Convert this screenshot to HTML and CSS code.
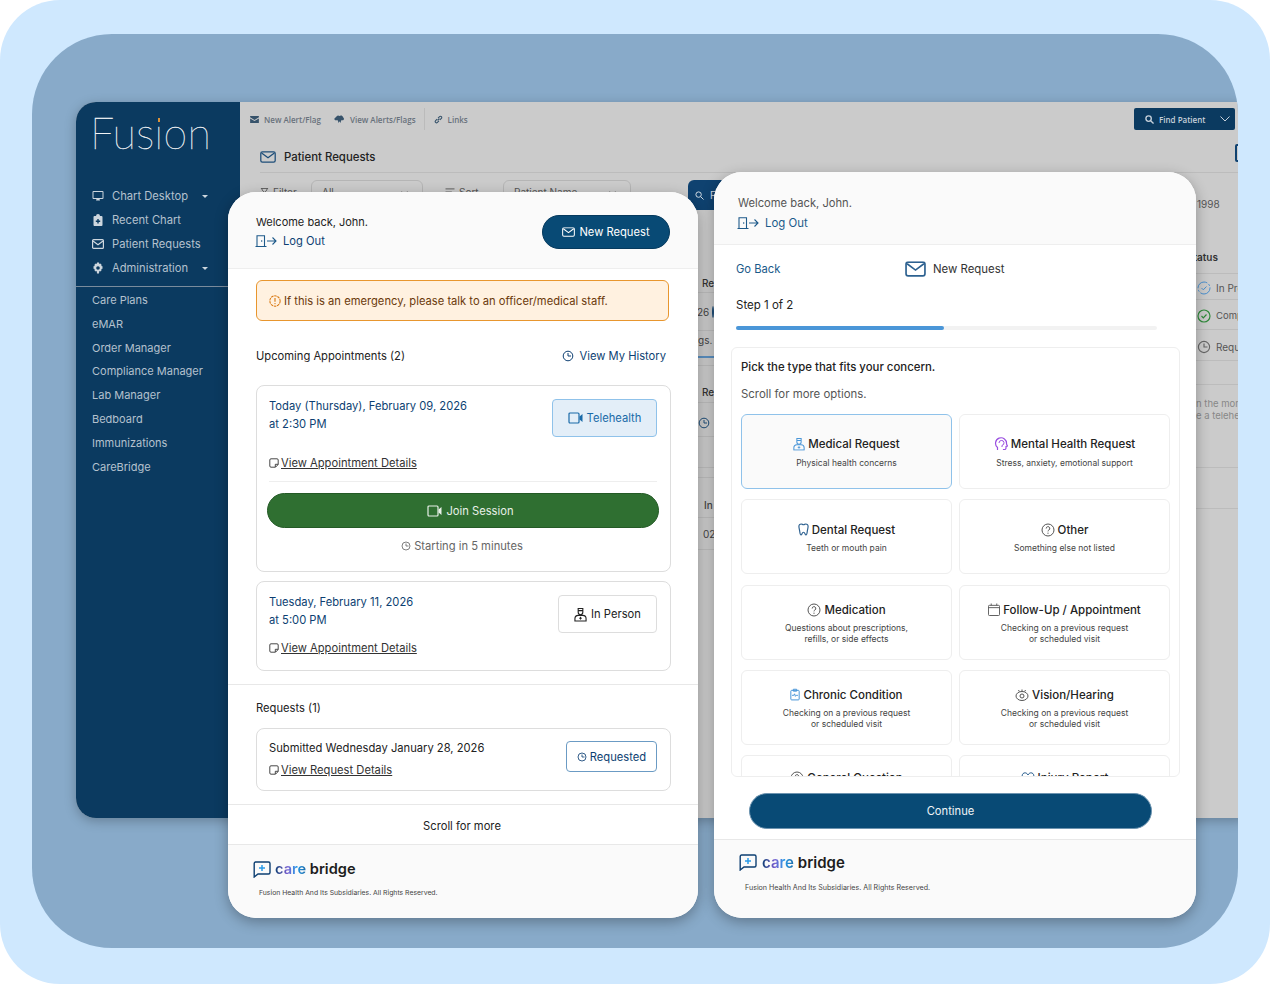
FILE: index.html
```html
<!DOCTYPE html>
<html lang="en">
<head>
    <meta charset="UTF-8">
    <title>Fusion CareBridge</title>
    <link rel="stylesheet" href="styles.css">
</head>
<body>
    <svg class="sprites" width="0" height="0">
        <symbol id="i-door" viewBox="0 0 22 12"><path d="M.5 11.5h11M2 11.5V.7h7.500v10.800M6.700 5.200v1.600M12 6h9M17.500 2.500 21 6l-3.500 3.500" fill="none" stroke="currentColor" stroke-width="1.100"/></symbol>
        <symbol id="i-mail" viewBox="0 0 20 15"><rect x="1" y="1" width="18" height="13" rx="2" fill="none" stroke="currentColor" stroke-width="1.6"/><path d="M2 2.500 10 8.500l8-6" fill="none" stroke="currentColor" stroke-width="1.6"/></symbol>
        <symbol id="i-note" viewBox="0 0 10 10"><path d="M6.500 9.200H2A1.200 1.200 0 0 1 .8 8V2A1.200 1.200 0 0 1 2 .8h6A1.200 1.200 0 0 1 9.200 2v4.500zM6.300 9V6.300H9" fill="none" stroke="currentColor" stroke-width=".9"/></symbol>
        <symbol id="i-video" viewBox="0 0 15 12"><rect x="1" y="1" width="10" height="10" rx="1" fill="none" stroke="currentColor" stroke-width="1.2"/><path d="M11.500 4.500 14.500 2v8l-3-2.500z" fill="currentColor"/></symbol>
        <symbol id="i-clock" viewBox="0 0 12 12"><circle cx="6" cy="6" r="4.800" fill="none" stroke="currentColor" stroke-width="1"/><path d="M6 3v3h3" fill="none" stroke="currentColor" stroke-width="1"/></symbol>
        <symbol id="i-help" viewBox="0 0 14 14"><circle cx="7" cy="7" r="6" fill="none" stroke="currentColor" stroke-width="1"/><path d="M5.200 5.500a1.800 1.800 0 1 1 2.700 1.500c-.6.400-.9.700-.9 1.400" fill="none" stroke="currentColor" stroke-width="1"/><circle cx="7" cy="10.200" r=".6" fill="currentColor"/></symbol>
        <symbol id="i-nurse" viewBox="0 0 14 16"><path d="M4.500 1.500h5v4.200a2.500 2.500 0 0 1-5 0zM4.500 3.800h5" fill="none" stroke="currentColor" stroke-width="1.2"/><path d="M1 15v-2.500A3.500 3.500 0 0 1 4.500 9h5a3.500 3.500 0 0 1 3.500 3.500V15z" fill="none" stroke="currentColor" stroke-width="1.2"/><path d="M7 10.500v3M5.500 12h3" fill="none" stroke="currentColor" stroke-width="1"/></symbol>
        <symbol id="i-brand" viewBox="0 0 18 17"><path d="M2.500 1h13A1.500 1.500 0 0 1 17 2.500v9a1.500 1.500 0 0 1-1.500 1.500H5l-3.800 3V2.500A1.500 1.500 0 0 1 2.500 1z" fill="none" stroke="#0d3f72" stroke-width="1.4"/><path d="M9 4v6M6 7h6" fill="none" stroke="#2a9be8" stroke-width="1.500"/></symbol>
    </svg>

    <div class="frame">
        <div class="app">
            <aside class="sidebar">
                <div class="logo">Fus<span class="logo-i">ı</span>on</div>
                <nav class="nav-main">
                    <a class="nav-item"><svg class="nav-icon" viewBox="0 0 12 11"><path d="M1.500.5h9a1 1 0 0 1 1 1v6a1 1 0 0 1-1 1h-9a1 1 0 0 1-1-1v-6a1 1 0 0 1 1-1zM1.500 1.500v6h9v-6zM4 10h4l-.5-1.500h-3z" fill="currentColor" fill-rule="evenodd"/></svg>Chart Desktop<span class="caret"></span></a>
                    <a class="nav-item"><svg class="nav-icon" viewBox="0 0 12 12"><path d="M2.500 2H4a2 2 0 0 1 4 0h1.500a1 1 0 0 1 1 1v8a1 1 0 0 1-1 1h-7a1 1 0 0 1-1-1V3a1 1 0 0 1 1-1zM5.300 5v1.500H3.800v1.400h1.500v1.500h1.400V7.900h1.500V6.500H6.700V5z" fill="currentColor" fill-rule="evenodd"/></svg>Recent Chart</a>
                    <a class="nav-item"><svg class="nav-icon" viewBox="0 0 12 10"><rect x=".6" y=".6" width="10.800" height="8.800" rx="1" fill="none" stroke="currentColor" stroke-width="1.2"/><path d="M1 2 6 5.800 11 2" fill="none" stroke="currentColor" stroke-width="1.2"/></svg>Patient Requests</a>
                    <a class="nav-item"><svg class="nav-icon" viewBox="0 0 12 12"><path d="M5 .5h2l.3 1.500 1-.5L9.800 3l-.7 1 1.400.3v2.400l-1.400.3.700 1L8.300 9.500l-1-.5L7 11.500H5L4.700 9l-1 .5L2.200 8l.7-1-1.400-.3V4.300L2.900 4l-.7-1 1.500-1.500 1 .5zM6 4.200a1.800 1.800 0 1 0 0 3.600 1.800 1.800 0 0 0 0-3.600z" fill="currentColor" fill-rule="evenodd"/></svg>Administration<span class="caret"></span></a>
                </nav>
                <nav class="nav-sub">
                    <a>Care Plans</a>
                    <a>eMAR</a>
                    <a>Order Manager</a>
                    <a>Compliance Manager</a>
                    <a>Lab Manager</a>
                    <a>Bedboard</a>
                    <a>Immunizations</a>
                    <a>CareBridge</a>
                </nav>
            </aside>
            <main class="app-main">
                <div class="toolbar">
                    <a class="tool"><svg viewBox="0 0 10 8" width="9" height="7"><path d="M0 0h10v1.500L5 4.500 0 1.500zM0 2.800l5 3 5-3V8H0z" fill="currentColor"/></svg>New Alert/Flag</a>
                    <a class="tool"><svg viewBox="0 0 12 9" width="11" height="8"><path d="M1 6a2 2 0 0 1 1-3.500A3 3 0 0 1 6 1a2.500 2.500 0 0 1 4 1.500A2 2 0 0 1 10 6H8L7 9 6 7 5 9 4 6z" fill="currentColor"/></svg>View Alerts/Flags</a>
                    <a class="tool tool-links"><svg viewBox="0 0 10 10" width="9" height="9"><path d="M4 6 6 4M3.500 4.500 1.800 6.200a1.400 1.400 0 0 0 2 2L5.500 6.500M4.500 3.500l1.700-1.700a1.400 1.400 0 0 1 2 2L6.500 5.500" fill="none" stroke="currentColor" stroke-width="1.2"/></svg>Links</a>
                    <button class="find-btn"><svg viewBox="0 0 10 10" width="9" height="9"><circle cx="4" cy="4" r="3" fill="none" stroke="currentColor" stroke-width="1.500"/><path d="M6.300 6.300 9.500 9.500" stroke="currentColor" stroke-width="1.500"/></svg>Find Patient<svg class="find-chev" viewBox="0 0 10 6" width="10" height="6"><path d="M.5.500 5 5 9.500.500" fill="none" stroke="currentColor"/></svg></button>
                </div>
                <div class="page-head">
                    <svg viewBox="0 0 20 15" width="16" height="12" class="page-icon"><use href="#i-mail"/></svg>
                    <span>Patient Requests</span>
                    <span class="head-tab"></span>
                </div>
                <div class="filters">
                    <span class="filter-label"><svg viewBox="0 0 10 10" width="9" height="9"><path d="M1 .5h8M2 .5c0 3 3 3.500 3 4.500s-3 1.500-3 4.500h6C8 6.500 5 6 5 5s3-1.500 3-4.500" fill="none" stroke="currentColor"/></svg>Filter</span>
                    <span class="select select-a">All<svg viewBox="0 0 10 6" width="7" height="4"><path d="M.5.500 5 5 9.500.500" fill="none" stroke="currentColor"/></svg></span>
                    <span class="filter-label filter-sort"><svg viewBox="0 0 10 10" width="10" height="9"><path d="M0 1h10M0 4.500h7M0 8h4" fill="none" stroke="currentColor"/></svg>Sort</span>
                    <span class="select select-b">Patient Name<svg viewBox="0 0 10 6" width="7" height="4"><path d="M.5.500 5 5 9.500.500" fill="none" stroke="currentColor"/></svg></span>
                    <span class="search-btn"><svg viewBox="0 0 10 10" width="9" height="9"><circle cx="4" cy="4" r="3" fill="none" stroke="currentColor" stroke-width="1.100"/><path d="M6.300 6.300 9.500 9.500" stroke="currentColor" stroke-width="1.100"/></svg>F</span>
                </div>
                <div class="peeks">
                    <div class="peek-mid">
                        <div class="peek-row r1">Re</div>
                        <div class="peek-row r2">26 <span class="peek-ring"></span></div>
                        <div class="peek-row r3">gs. T</div>
                        <div class="peek-row r4"></div>
                        <div class="peek-row r5">Re</div>
                        <div class="peek-row r6"><svg viewBox="0 0 12 12" width="12" height="12" class="peek-clock"><use href="#i-clock"/></svg></div>
                        <div class="peek-row r7"></div>
                        <div class="peek-row r8"></div>
                        <div class="peek-row r9">In</div>
                        <div class="peek-row r10">02</div>
                    </div>
                    <div class="peek-right">
                        <div class="pr-year">1998</div>
                        <div class="pr-row pr-status">Status</div>
                        <div class="pr-row pr-a"><svg viewBox="0 0 14 14" width="14" height="14" class="st-blue"><circle cx="7" cy="7" r="6" fill="none" stroke="currentColor" stroke-dasharray="13 1.500 2 1.500"/><path d="M4.500 7 6.300 8.800 9.500 5.500" fill="none" stroke="currentColor"/></svg>In Progress</div>
                        <div class="pr-row pr-b"><svg viewBox="0 0 14 14" width="14" height="14" class="st-green"><circle cx="7" cy="7" r="6" fill="none" stroke="currentColor" stroke-width="1.2"/><path d="M4.500 7 6.300 8.800 9.500 5.500" fill="none" stroke="currentColor" stroke-width="1.2"/></svg>Completed</div>
                        <div class="pr-row pr-c"><svg viewBox="0 0 12 12" width="14" height="14" class="st-grey"><use href="#i-clock"/></svg>Requested</div>
                        <div class="pr-note">n the morning<br>e a telehealth</div>
                        <div class="pr-rule"></div>
                    </div>
                </div>
            </main>
        </div>

        <section class="phone phone-left">
            <header class="phone-head head-left">
                <div>
                    <p class="welcome">Welcome back, John.</p>
                    <a class="logout"><svg viewBox="0 0 22 12" width="22" height="12"><use href="#i-door"/></svg>Log Out</a>
                </div>
                <button class="new-btn"><svg viewBox="0 0 20 15" width="13" height="10"><use href="#i-mail"/></svg>New Request</button>
            </header>
            <div class="phone-body">
                <div class="alert"><svg viewBox="0 0 14 14" width="12" height="12"><circle cx="7" cy="7" r="6" fill="none" stroke="#d9770f" stroke-width="1.2" stroke-dasharray="3 .8"/><path d="M7 3.500v4.500" stroke="#d9770f" stroke-width="1.3"/><circle cx="7" cy="10" r=".8" fill="#d9770f"/></svg>If this is an emergency, please talk to an officer/medical staff.</div>
                <div class="appt-head">
                    <span>Upcoming Appointments (2)</span>
                    <a class="history"><svg viewBox="0 0 12 12" width="12" height="12"><use href="#i-clock"/></svg>View My History</a>
                </div>
                <article class="card card-today">
                    <div class="card-top">
                        <div class="when">Today (Thursday), February 09, 2026<br>at 2:30 PM</div>
                        <span class="kind kind-tele"><svg viewBox="0 0 15 12" width="15" height="12"><use href="#i-video"/></svg>Telehealth</span>
                    </div>
                    <a class="detail-link"><svg viewBox="0 0 10 10" width="10" height="10"><use href="#i-note"/></svg><u>View Appointment Details</u></a>
                    <div class="card-rule"></div>
                    <button class="join-btn"><svg viewBox="0 0 15 12" width="15" height="12"><use href="#i-video"/></svg>Join Session</button>
                    <p class="starting"><svg viewBox="0 0 12 12" width="10" height="10"><use href="#i-clock"/></svg>Starting in 5 minutes</p>
                </article>
                <article class="card card-next">
                    <div class="card-top">
                        <div class="when">Tuesday, February 11, 2026<br>at 5:00 PM</div>
                        <span class="kind kind-person"><svg viewBox="0 0 14 16" width="13" height="15"><use href="#i-nurse"/></svg>In Person</span>
                    </div>
                    <a class="detail-link"><svg viewBox="0 0 10 10" width="10" height="10"><use href="#i-note"/></svg><u>View Appointment Details</u></a>
                </article>
                <div class="section-rule"></div>
                <h3 class="req-title">Requests (1)</h3>
                <article class="card card-req">
                    <div>
                        <div class="submitted">Submitted Wednesday January 28, 2026</div>
                        <a class="detail-link"><svg viewBox="0 0 10 10" width="10" height="10"><use href="#i-note"/></svg><u>View Request Details</u></a>
                    </div>
                    <span class="kind-req"><svg viewBox="0 0 12 12" width="10" height="10"><use href="#i-clock"/></svg>Requested</span>
                </article>
                <div class="section-rule rule-b"></div>
                <p class="scroll-more">Scroll for more</p>
            </div>
            <footer class="phone-foot foot-left">
                <div class="brand"><svg viewBox="0 0 18 17" width="18" height="17"><use href="#i-brand"/></svg><span class="brand-name"><span class="brand-care">care</span> bridge</span></div>
                <p class="legal">Fusion Health And Its Subsidiaries. All Rights Reserved.</p>
            </footer>
        </section>

        <section class="phone phone-right">
            <header class="phone-head head-right">
                <p class="welcome welcome-soft">Welcome back, John.</p>
                <a class="logout logout-soft"><svg viewBox="0 0 22 12" width="22" height="12"><use href="#i-door"/></svg>Log Out</a>
            </header>
            <div class="phone-body wizard">
                <div class="wizard-nav">
                    <a class="go-back">Go Back</a>
                    <span class="wizard-title"><svg viewBox="0 0 20 15" width="21" height="16"><use href="#i-mail"/></svg>New Request</span>
                </div>
                <p class="step">Step 1 of 2</p>
                <div class="progress"><div class="progress-fill"></div></div>
                <div class="picker">
                    <p class="pick-title">Pick the type that fits your concern.</p>
                    <p class="pick-sub">Scroll for more options.</p>
                    <div class="tiles">
                        <div class="tile tile-on">
                            <div class="tile-name"><svg viewBox="0 0 14 16" width="12" height="14" class="c-blue"><use href="#i-nurse"/></svg>Medical Request</div>
                            <p>Physical health concerns</p>
                        </div>
                        <div class="tile">
                            <div class="tile-name"><svg viewBox="0 0 14 14" width="14" height="14" class="c-purple"><path d="M3.500 13v-2.500A5.500 5.500 0 1 1 12.500 7l1 2-1.500.5V11a1.500 1.500 0 0 1-1.500 1.500H9.500V13" fill="none" stroke="currentColor" stroke-width="1.2"/><path d="M5 6a2.500 2.500 0 1 1 3 2.400V10" fill="none" stroke="currentColor"/></svg>Mental Health Request</div>
                            <p>Stress, anxiety, emotional support</p>
                        </div>
                        <div class="tile">
                            <div class="tile-name"><svg viewBox="0 0 12 14" width="11" height="13" class="c-navy"><path d="M3.500 1C2 1 1 2 1 3.500c0 2 .5 3 .8 5 .2 1.500.5 4.500 1.500 4.500s1-3 2.700-3 1.700 3 2.700 3 1.300-3 1.500-4.500c.3-2 .8-3 .8-5C11 2 10 1 8.500 1 7.500 1 7 1.800 6 1.800S4.500 1 3.500 1z" fill="none" stroke="currentColor" stroke-width="1.3"/></svg>Dental Request</div>
                            <p>Teeth or mouth pain</p>
                        </div>
                        <div class="tile">
                            <div class="tile-name"><svg viewBox="0 0 14 14" width="14" height="14"><use href="#i-help"/></svg>Other</div>
                            <p>Something else not listed</p>
                        </div>
                        <div class="tile">
                            <div class="tile-name"><svg viewBox="0 0 14 14" width="14" height="14"><use href="#i-help"/></svg>Medication</div>
                            <p>Questions about prescriptions,<br>refills, or side effects</p>
                        </div>
                        <div class="tile">
                            <div class="tile-name"><svg viewBox="0 0 13 14" width="12" height="13"><path d="M1.500 2.500h10a1 1 0 0 1 1 1v9a1 1 0 0 1-1 1h-10a1 1 0 0 1-1-1v-9a1 1 0 0 1 1-1zM.5 5h12M3.500.5v2M9.500.5v2" fill="none" stroke="currentColor"/></svg>Follow-Up / Appointment</div>
                            <p>Checking on a previous request<br>or scheduled visit</p>
                        </div>
                        <div class="tile">
                            <div class="tile-name"><svg viewBox="0 0 12 14" width="10" height="13" class="c-blue"><path d="M2 2h8a1 1 0 0 1 1 1v9.500a1 1 0 0 1-1 1H2a1 1 0 0 1-1-1V3a1 1 0 0 1 1-1zM4 .7h4V3H4zM2.500 8h2l1-1.800 1 3 1-1.200h2" fill="none" stroke="currentColor" stroke-width="1.2"/></svg>Chronic Condition</div>
                            <p>Checking on a previous request<br>or scheduled visit</p>
                        </div>
                        <div class="tile">
                            <div class="tile-name"><svg viewBox="0 0 14 14" width="14" height="14"><ellipse cx="7" cy="8" rx="6" ry="4.500" fill="none" stroke="currentColor"/><circle cx="7" cy="8" r="2" fill="none" stroke="currentColor"/><path d="M7 1.500V3M3.500 2l.8 1.500M10.500 2l-.8 1.500" stroke="currentColor"/></svg>Vision/Hearing</div>
                            <p>Checking on a previous request<br>or scheduled visit</p>
                        </div>
                        <div class="tile tile-cut">
                            <div class="tile-name"><svg viewBox="0 0 14 14" width="14" height="14"><use href="#i-help"/></svg>General Question</div>
                        </div>
                        <div class="tile tile-cut">
                            <div class="tile-name"><svg viewBox="0 0 14 14" width="14" height="14" class="c-navy"><path d="M7 4C6 2 4.500 1.500 3 2S.5 4.500 1.500 7 5 11.500 7 13c2-1.500 4.500-3.500 5.500-6S12.500 2.500 11 2 8 2 7 4z" fill="none" stroke="currentColor"/></svg>Injury Report</div>
                        </div>
                    </div>
                </div>
                <button class="continue-btn">Continue</button>
            </div>
            <footer class="phone-foot foot-right">
                <div class="brand"><svg viewBox="0 0 18 17" width="18" height="17"><use href="#i-brand"/></svg><span class="brand-name"><span class="brand-care">care</span> bridge</span></div>
                <p class="legal">Fusion Health And Its Subsidiaries. All Rights Reserved.</p>
            </footer>
        </section>
    </div>
</body>
</html>
```

FILE: styles.css
```css
* {
    box-sizing: border-box;
}

html, body {
    margin: 0;
    padding: 0;
    background-color: #fff;
}

body {
    width: 1270px;
    height: 984px;
    overflow: hidden;
    font-family: Inter, "Liberation Sans", sans-serif;
    font-size: 11.2px;
    color: #222;
    background-color: #cfe8fe;
    border-radius: 60px;
    padding: 34px 32px 36px;
}

p, h3 {
    margin: 0;
    font-weight: 400;
}

svg {
    flex: none;
}

.sprites {
    position: absolute;
}

.frame {
    position: relative;
    width: 1206px;
    height: 914px;
    overflow: hidden;
    background-color: #88aac9;
    border-radius: 80px;
}

/* desktop app behind the phones */
.app {
    position: absolute;
    left: 44px;
    top: 68px;
    width: 1180px;
    height: 716px;
    display: flex;
    border-radius: 20px;
    overflow: hidden;
    background-color: #cbcbcb;
    box-shadow: 0 3px 12px rgba(0, 0, 0, 0.25);
}

.sidebar {
    width: 164px;
    flex: none;
    background-color: #0b3a60;
    color: #b4c1ce;
}

.logo {
    padding: 5px 0 0 14px;
    height: 82px;
    font-family: Lato, sans-serif;
    font-weight: 100;
    font-size: 43px;
    letter-spacing: 0.2px;
    color: #f2f4f6;
    -webkit-text-stroke: 0.3px #f2f4f6;
}

.logo-i {
    position: relative;
}

.logo-i::before {
    content: "";
    position: absolute;
    left: 4px;
    top: 11px;
    width: 2px;
    height: 4px;
    background-color: #d9923a;
}

.nav-main {
    display: flex;
    flex-direction: column;
    padding-bottom: 6px;
    border-bottom: 1px solid #7a8b9c;
    width: 152px;
}

.nav-item {
    display: flex;
    align-items: center;
    height: 24px;
    padding-left: 16px;
    gap: 8px;
}

.nav-icon {
    width: 12px;
    height: 12px;
    color: #cdd6de;
}

.caret {
    margin-left: auto;
    margin-right: 20px;
    border-left: 3px solid transparent;
    border-right: 3px solid transparent;
    border-top: 3px solid #cdd6de;
}

.nav-sub {
    display: flex;
    flex-direction: column;
    padding: 2px 0 0 16px;
    font-size: 11px;
}

.nav-sub a {
    height: 23.8px;
    line-height: 23.8px;
}

.app-main {
    flex: 1;
    min-width: 0;
    display: flex;
    flex-direction: column;
}

.toolbar {
    display: flex;
    align-items: center;
    height: 34px;
    padding: 0 21px 0 10px;
    font-family: "Open Sans", sans-serif;
    font-size: 8px;
    font-weight: 600;
    color: #68717b;
}

.tool {
    display: flex;
    align-items: center;
    gap: 5px;
    margin-right: 13px;
    color: #68717b;
}

.tool svg {
    color: #37536b;
}

.tool-links {
    padding-left: 9px;
    height: 22px;
    border-left: 1px solid #bbb;
    margin-right: 0;
    margin-left: -5px;
}

.find-btn {
    display: flex;
    align-items: center;
    gap: 5px;
    margin-left: auto;
    width: 101px;
    height: 22px;
    padding: 0 0 0 11px;
    border: 0;
    border-radius: 2px;
    background-color: #0b3a60;
    color: #c6d0da;
    font: 600 8px "Open Sans", sans-serif;
}

.find-chev {
    margin-left: auto;
    margin-right: 5px;
}

.page-head {
    position: relative;
    display: flex;
    align-items: center;
    gap: 8px;
    height: 37px;
    margin: 0 0 0 20px;
    padding-top: 5px;
    border-bottom: 1px solid #bcbcbc;
    font-size: 11.4px;
    font-weight: 500;
}

.page-icon {
    color: #1e4e79;
}

.head-tab {
    position: absolute;
    left: 975px;
    top: 8px;
    width: 10px;
    height: 18px;
    border: 2px solid #0f4270;
    border-radius: 2px;
}

.filters {
    display: flex;
    align-items: flex-start;
    height: 100px;
    padding: 7px 0 0 20px;
    color: #555;
    font-size: 10px;
}

.filter-label {
    display: flex;
    align-items: center;
    gap: 4px;
    width: 51px;
    padding-top: 6px;
}

.filter-sort {
    margin-left: 22px;
    width: 58px;
}

.select {
    display: flex;
    justify-content: space-between;
    height: 30px;
    padding: 5px 14px 0 10px;
    border: 1px solid #b5b5b5;
    border-radius: 6px;
}

.select svg {
    margin-top: 5px;
}

.select-a {
    width: 112px;
}

.select-b {
    width: 128px;
}

.search-btn {
    display: flex;
    align-items: center;
    gap: 6px;
    margin-left: 57px;
    width: 60px;
    height: 30px;
    padding-left: 7px;
    border-radius: 6px;
    background-color: #0f4270;
    color: #d5dde5;
}

/* bits of the table that show between and beside the phones */
.peeks {
    position: absolute;
    top: 172px;
    left: 164px;
    right: 0;
    bottom: 0;
    font-size: 10px;
    color: #555;
}

.peek-mid {
    position: absolute;
    left: 440px;
    width: 34px;
    top: 0;
    white-space: nowrap;
    overflow: hidden;
    color: #444;
}

.peek-row {
    padding-left: 22px;
    border-bottom: 1px solid #bcbcbc;
    display: flex;
    align-items: center;
    gap: 3px;
}

.r1 { height: 19px; color: #333; font-weight: 500; }
.r2 { height: 38px; padding-left: 17px; }
.r3 { height: 27px; padding: 0 0 8px 18px; border-bottom: 2px solid #5a8fc0; }
.r4 { height: 8px; }
.r5 { height: 37px; padding-top: 16px; color: #333; font-weight: 500; }
.r6 { height: 34px; padding-top: 6px; }
.r7 { height: 31px; }
.r8 { height: 10px; }
.r9 { height: 40px; padding: 14px 0 0 24px; font-weight: 500; }
.r10 { height: 32px; padding-left: 23px; }

.peek-ring {
    width: 8px;
    height: 12px;
    border: 1.5px solid #1e4e79;
    border-radius: 50%;
}

.peek-clock {
    color: #1e4e79;
    margin-left: -4px;
}

.peek-right {
    position: absolute;
    left: 956px;
    width: 120px;
    top: -80px;
    white-space: nowrap;
}

.pr-year {
    height: 20px;
    line-height: 20px;
    padding-left: 1px;
}

.pr-row {
    display: flex;
    align-items: center;
    gap: 5px;
    padding-left: 1px;
    border-bottom: 1px solid #bcbcbc;
}

.pr-status {
    height: 60px;
    margin-left: -9px;
    padding: 26px 0 0;
    font-weight: 600;
    color: #333;
}

.pr-a { height: 26px; padding-top: 2px; }
.pr-b { height: 30px; padding-top: 2px; font-size: 9.5px; }
.pr-c { height: 31px; padding-top: 3px; }

.pr-note {
    margin-top: 23px;
    padding-top: 13px;
    height: 84px;
    line-height: 12px;
    font-size: 9.5px;
    border-top: 1px solid #bcbcbc;
    border-bottom: 1px solid #bcbcbc;
    color: #888;
}

.pr-rule {
    height: 41px;
    border-bottom: 1px solid #bcbcbc;
}

.st-blue { color: #4a90cf; }
.st-green { color: #2f8a3a; }
.st-grey { color: #666; }

/* phones */
.phone {
    position: absolute;
    display: flex;
    flex-direction: column;
    background-color: #fff;
    border-radius: 28px;
    overflow: hidden;
    box-shadow: 0 4px 14px rgba(0, 0, 0, 0.3);
}

.phone-left {
    left: 196px;
    top: 158px;
    width: 470px;
    height: 726px;
}

.phone-right {
    left: 682px;
    top: 138px;
    width: 482px;
    height: 746px;
}

.phone-head {
    flex: none;
    background-color: #fafafa;
    border-bottom: 1.5px solid #eee;
}

.head-left {
    display: flex;
    justify-content: space-between;
    align-items: center;
    height: 77px;
    padding: 3px 28px 0;
}

.head-right {
    height: 73px;
    padding: 24px 24px 0;
}

.welcome {
    font-size: 11px;
    line-height: 15px;
}

.welcome-soft {
    font-size: 11.2px;
    color: #555;
}

.logout {
    display: flex;
    align-items: center;
    gap: 6px;
    margin-top: 4px;
    color: #0d3f72;
    line-height: 14px;
}

.logout svg {
    margin-left: -1px;
    color: #1e5a8a;
}

.logout-soft {
    margin-top: 5px;
    font-size: 11.4px;
    color: #1a5a8a;
}

.new-btn {
    display: flex;
    align-items: center;
    justify-content: center;
    gap: 4px;
    width: 128px;
    height: 34px;
    border: 1px solid #063a5e;
    border-radius: 17px;
    background-color: #084a75;
    color: #fff;
    font: 400 11.2px Inter, sans-serif;
}

.phone-body {
    flex: 1;
    min-height: 0;
    padding: 0 28px;
    position: relative;
}

.alert {
    display: flex;
    align-items: center;
    gap: 3px;
    width: 413px;
    height: 41px;
    margin-top: 11px;
    padding-left: 12px;
    background-color: #fff1e0;
    border: 1px solid #e8962e;
    border-radius: 6px;
    color: #6b3a0c;
}

.appt-head {
    display: flex;
    justify-content: space-between;
    align-items: center;
    width: 410px;
    height: 16px;
    margin-top: 27px;
    color: #222;
}

.history {
    display: flex;
    align-items: center;
    gap: 5px;
    color: #0d3f72;
}

.card {
    width: 415px;
    padding: 0 13px 0 12px;
    border: 1.5px solid #ddd;
    border-radius: 8px;
}

.card-today {
    height: 187px;
    margin-top: 21px;
    padding-top: 13px;
}

.card-next {
    height: 90px;
    margin-top: 9px;
    padding-top: 13px;
}

.card-top {
    display: flex;
    justify-content: space-between;
    align-items: flex-start;
}

.when {
    margin-top: -2px;
    color: #0d3f72;
    line-height: 18px;
}

.kind {
    display: flex;
    align-items: center;
    justify-content: center;
    height: 38px;
    border-radius: 4px;
    gap: 4px;
}

.kind-tele {
    width: 105px;
    background-color: #e3eef8;
    border: 1px solid #8fc2ea;
    color: #1a6aa8;
}

.kind-person {
    width: 99px;
    background-color: #fff;
    border: 1px solid #ddd;
    color: #222;
}

.detail-link {
    display: flex;
    align-items: center;
    gap: 2px;
    color: #333;
    line-height: 14px;
}

.card-today .detail-link {
    margin-top: 19px;
}

.card-next .detail-link {
    margin-top: 8px;
}

.card-rule {
    height: 1px;
    margin-top: 11px;
    background-color: #eee;
}

.join-btn {
    display: flex;
    align-items: center;
    justify-content: center;
    gap: 4px;
    width: 392px;
    height: 35px;
    margin: 11px 0 0 -2.5px;
    padding-left: 22px;
    border: 1px solid #245a26;
    border-radius: 18px;
    background-color: #2f6f31;
    color: #e8f0e8;
    font: 400 11.2px Inter, sans-serif;
}

.starting {
    display: flex;
    align-items: center;
    justify-content: center;
    gap: 3px;
    margin-top: 11px;
    padding-right: 2px;
    color: #666;
}

.section-rule {
    height: 1px;
    margin: 13px -28px 0;
    background-color: #e8e8e8;
}

.req-title {
    margin-top: 16px;
    font-size: 11.2px;
    line-height: 14px;
}

.card-req {
    display: flex;
    justify-content: space-between;
    align-items: flex-start;
    height: 63px;
    margin-top: 13px;
    padding-top: 12px;
}

.submitted {
    line-height: 14px;
    margin-bottom: 8px;
}

.kind-req {
    display: flex;
    align-items: center;
    justify-content: center;
    gap: 3px;
    width: 91px;
    height: 31px;
    border: 1px solid #6b9bc4;
    border-radius: 4px;
    color: #0d3f72;
}

.rule-b {
    margin-top: 13px;
}

.scroll-more {
    margin-top: 14px;
    text-align: center;
    padding-right: 2px;
    line-height: 14px;
}

.phone-foot {
    flex: none;
    background-color: #fafafa;
    border-top: 1px solid #e8e8e8;
}

.foot-left {
    height: 74px;
    padding: 15px 0 0 25px;
}

.foot-right {
    height: 79px;
    padding: 13px 0 0 25px;
}

.brand {
    display: flex;
    align-items: center;
    gap: 4px;
    height: 18px;
}

.foot-right .brand {
    gap: 5px;
}

.brand-name {
    font-size: 14.6px;
    font-weight: 600;
    color: #1d1d1d;
}

.foot-right .brand-name {
    font-size: 15px;
}

.brand-care {
    background: linear-gradient(90deg, #0d3f72 0%, #7a5fd0 40%, #2a9be8 70%, #1a6aa8 100%);
    -webkit-background-clip: text;
    background-clip: text;
    color: transparent;
}

.legal {
    margin: 10px 0 0 6px;
    font-size: 6.85px;
    color: #444;
    line-height: 9px;
}

.foot-right .legal {
    margin-top: 12px;
    margin-left: 6px;
    font-size: 7.1px;
}

/* new request wizard */
.wizard {
    padding: 0;
}

.wizard-nav {
    display: flex;
    align-items: center;
    height: 48px;
    padding-left: 22px;
}

.go-back {
    width: 169px;
    color: #1a5a8a;
}

.wizard-title {
    display: flex;
    align-items: center;
    gap: 7px;
    font-size: 11.4px;
    color: #333;
}

.wizard-title svg {
    color: #2d6190;
}

.step {
    margin: 5px 0 0 22px;
    height: 14px;
    line-height: 14px;
    font-size: 11.5px;
    color: #222;
}

.progress {
    width: 421px;
    height: 4px;
    margin: 14px 0 0 22px;
    border-radius: 2px;
    background-color: #f2f2f2;
}

.progress-fill {
    width: 208px;
    height: 4px;
    border-radius: 2px;
    background-color: #4a96d8;
}

.picker {
    width: 449px;
    height: 430px;
    margin: 17px 0 0 17px;
    padding: 0 9px;
    overflow: hidden;
    border: 1px solid #eee;
    border-radius: 6px;
}

.pick-title {
    margin-top: 12px;
    line-height: 14px;
    font-size: 11.4px;
    font-weight: 500;
    color: #222;
}

.pick-sub {
    margin-top: 13px;
    line-height: 14px;
    font-size: 11.4px;
    color: #555;
}

.tiles {
    display: grid;
    grid-template-columns: 211px 211px;
    grid-auto-rows: 75px;
    gap: 10.3px 7px;
    margin-top: 13px;
}

.tile {
    display: flex;
    flex-direction: column;
    justify-content: center;
    padding-top: 2px;
    text-align: center;
    border: 1px solid #eee;
    border-radius: 6px;
}

.tile-on {
    background-color: #fafafa;
    border-color: #8fc2ea;
}

.tile-cut {
    padding-bottom: 32px;
}

.tile-name {
    display: flex;
    justify-content: center;
    align-items: center;
    gap: 3px;
    height: 15px;
    font-size: 11.5px;
    font-weight: 500;
    color: #222;
}

.tile-name svg {
    color: #555;
}

.tile-name .c-blue { color: #4a96d8; }
.tile-name .c-purple { color: #9a4fe0; }
.tile-name .c-navy { color: #2d6190; }

.tile p {
    margin-top: 6px;
    font-size: 8.5px;
    line-height: 10.5px;
    color: #444;
}

.continue-btn {
    display: block;
    width: 403px;
    height: 36px;
    margin: 16px 0 0 35px;
    border: 1px solid #6d94b0;
    border-radius: 18px;
    background-color: #084a75;
    color: #f0f4f7;
    font: 400 11.2px Inter, sans-serif;
}
```
